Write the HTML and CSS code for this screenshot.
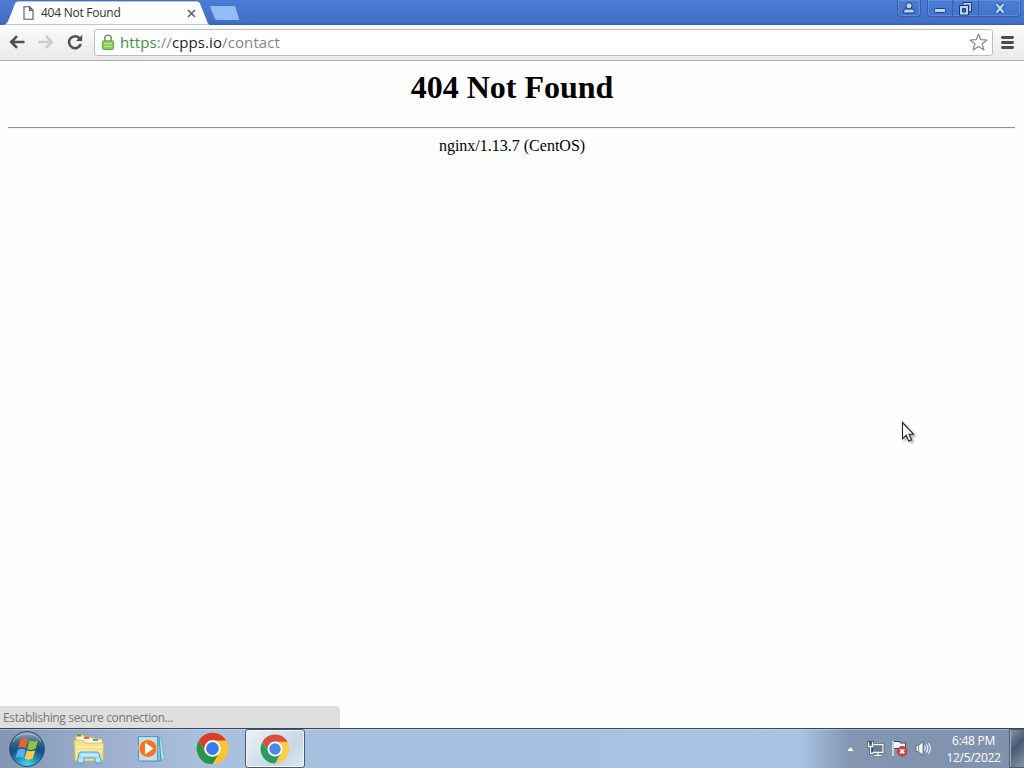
FILE: index.html
```
<!DOCTYPE html>
<html lang="en">
<head>
  <meta charset="UTF-8">
  <title>404 Not Found</title>
  <link rel="stylesheet" href="styles.css">
</head>
<body>
  <header class="titlebar">
    <div class="tab">
      <svg class="tab-shape" width="212" height="25" viewBox="0 0 212 25">
        <path d="M0 25C6 25 7 23 9 18L14 5C15 2 16 1 19 1H195C199 1 200 2 201 5L207 20C208 24 209 25 212 25Z" fill="#fdfdfe" stroke="#3c60a8" stroke-width=".7"/>
      </svg>
      <svg class="page-icon" width="11" height="14" viewBox="0 0 11 14" fill="#fff" stroke="#555" stroke-width="1.1">
        <path d="M1 .8H6.6L10 4.2V13.2H1ZM6.5 .8V4.4H10"/>
      </svg>
      <span class="tab-title">404 Not Found</span>
      <svg class="tab-close" width="9" height="9" viewBox="0 0 9 9" stroke="#666" stroke-width="1.7">
        <path d="M1 1L8 8M8 1L1 8"/>
      </svg>
    </div>
    <svg class="new-tab" width="32" height="16" viewBox="0 0 32 16">
      <path d="M3.500 .5H25C27 .5 27.500 1 28 2.500L31.300 13C31.800 15 31.300 15.500 29.500 15.500H10C8 15.500 7 15 6 13L2 3C1.500 1 1.500 .5 3.500 .5Z" fill="#91bcf5" stroke="#4773bd"/>
    </svg>
    <div class="win-buttons">
      <div class="win-group user">
        <svg width="12" height="12" viewBox="0 0 12 12" fill="#b9d5fb" stroke="#1f386f">
          <path d="M.7 11V9Q.7 7 3 7H9Q11.300 7 11.300 9V11Z"/><circle cx="6" cy="3.800" r="3.100"/>
        </svg>
      </div>
      <div class="win-group">
        <div class="win-btn min">
          <svg width="12" height="5" viewBox="0 0 12 5"><rect x=".5" y=".5" width="11" height="4" rx="1" fill="#b9d5fb" stroke="#233f7d"/></svg>
        </div>
        <div class="win-btn restore">
          <svg width="13" height="14" viewBox="0 0 13 14">
            <path d="M4 .5H12.500V9.500H4Z" fill="#b9d5fb" stroke="#1f386f"/>
            <path d="M6 2.500H10.500V7.500H6Z" fill="#3d67b8"/>
            <path d="M.5 3.500H9.500V13H.5Z" fill="#b9d5fb" stroke="#1f386f"/>
            <path d="M3.500 6.500H6.500V10H3.500Z" fill="#3d67b8" stroke="#1f386f"/>
          </svg>
        </div>
        <div class="win-btn close">
          <svg width="12" height="11" viewBox="0 0 12 11" fill="none">
            <path d="M2.500 1.300L9.500 9.500M9.500 1.300L2.500 9.500" stroke="#28488b" stroke-width="4.200"/>
            <path d="M2.500 1.300L9.500 9.500M9.500 1.300L2.500 9.500" stroke="#b3daf9" stroke-width="2.500"/>
          </svg>
        </div>
      </div>
    </div>
  </header>

  <nav class="toolbar">
    <svg class="nav-icon" width="16" height="14" viewBox="0 0 16 14" fill="none" stroke="#4f4f4f" stroke-width="2.600"><path d="M15.500 7H2.500M8 1.200L2.200 7L8 12.800"/></svg>
    <svg class="nav-icon" width="16" height="14" viewBox="0 0 16 14" fill="none" stroke="#cbcbcb" stroke-width="2.600"><path d="M.5 7H13.500M8 1.200L13.800 7L8 12.800"/></svg>
    <svg class="nav-icon" width="16" height="16" viewBox="0 0 16 16"><path d="M12.800 4.400A6 6 0 1 0 13.800 10" fill="none" stroke="#4f4f4f" stroke-width="2.500"/><path d="M15.200 .8V7H9Z" fill="#4f4f4f"/></svg>
    <div class="address">
      <svg class="lock" width="12" height="16" viewBox="0 0 12 16">
        <path d="M2.800 7.500V4.500C2.800 .2 9.200 .2 9.200 4.500V7.500" fill="none" stroke="#858d7e" stroke-width="1.600"/>
        <rect x=".6" y="6.800" width="10.800" height="8.600" rx="1" fill="#8fd05d" stroke="#55a432"/>
        <path d="M2 9.500H10M2 12.500H10" stroke="#b4e58d"/>
      </svg>
      <span class="url"><span class="scheme">https</span>://<span class="host">cpps.io</span>/contact</span>
      <svg class="star" width="19" height="18" viewBox="0 0 19 18"><path d="M9.500 1L11.700 6.600L18 7L13.200 10.800L14.900 16.900L9.500 13.500L4.100 16.900L5.800 10.800L1 7L7.300 6.600Z" fill="#fff" stroke="#858585" stroke-width="1.200" stroke-linejoin="round"/></svg>
    </div>
    <svg class="menu" width="13" height="13" viewBox="0 0 13 13" stroke="#4c4c4c" stroke-width="2.800" stroke-linecap="round"><path d="M1.400 1.500H11.600M1.400 6.500H11.600M1.400 11.500H11.600"/></svg>
  </nav>

  <main class="page">
    <h1>404 Not Found</h1>
    <hr>
    <p>nginx/1.13.7 (CentOS)</p>
    <div class="status">Establishing secure connection...</div>
  </main>

  <footer class="taskbar">
    <svg class="start" width="38" height="38" viewBox="0 0 38 38">
      <defs>
        <linearGradient id="orb" x1="0" y1="0" x2="0" y2="1"><stop offset="0" stop-color="#9bb2c4"/><stop offset=".3" stop-color="#3f6588"/><stop offset=".55" stop-color="#0c4f82"/><stop offset="1" stop-color="#17739f"/></linearGradient>
        <radialGradient id="glow" cx=".5" cy="1" r=".6"><stop offset="0" stop-color="#4fe6f6"/><stop offset="1" stop-color="#2ba9d5" stop-opacity="0"/></radialGradient>
      </defs>
      <circle cx="19" cy="19" r="17.300" fill="url(#orb)" stroke="#254869"/>
      <circle cx="19" cy="19" r="16.800" fill="url(#glow)"/>
      <path d="M5 12C10 1 28 1 33 12" fill="none" stroke="#c4dae6" stroke-opacity=".6"/>
      <path d="M12.500 9.500Q16 7.200 20 9.500L18 18.300Q14 16.300 10.200 18.300Z" fill="#e8662d"/>
      <path d="M21.300 10.300Q25.500 12.500 30 10.200L27.600 18.800Q23 21 19.300 18.900Z" fill="#8ec348"/>
      <path d="M9.800 19.700Q13.500 17.700 17.600 19.800L15.400 28Q11.500 26 7.500 28Z" fill="#55b1eb"/>
      <path d="M18.900 20.300Q23 22.300 27.200 20.200L24.800 28.500Q20.500 30.800 16.700 28.500Z" fill="#ffcc45"/>
    </svg>
    <svg class="explorer" width="34" height="32" viewBox="0 0 34 32">
      <path d="M3 3L5 1.500H11L13 3.500H20L22 5H30V27H3Z" fill="#ecd16c" stroke="#c2a557" stroke-width=".8"/>
      <path d="M5 3.500H11L13 5.500H20L22 7H30V12H5Z" fill="#fffdf0"/>
      <path d="M5 2.500H9" stroke="#35a45a" stroke-width="2"/><path d="M12 5H17" stroke="#d46a4b" stroke-width="2"/><path d="M21 7H26" stroke="#4e9de0" stroke-width="2"/>
      <path d="M2 7H11L14 10H32L31 28H3Z" fill="#f6e28a" stroke="#d1b560" stroke-width=".8"/>
      <path d="M4 14H30M4 18H30" stroke="#fff4bc"/>
      <path d="M5 30L7 21Q7.500 19 9 19H25Q26.500 19 27 21L30 30H23V25H12V30Z" fill="#a6dcf4" stroke="#46a5d2"/>
      <path d="M9 22H26M7 27H11M24 27H28" stroke="#e8faff"/>
    </svg>
    <svg class="player" width="30" height="28" viewBox="0 0 30 28">
      <path d="M8 3H24L28 25H8Z" fill="#a9d8ef" stroke="#7db5cf"/><path d="M5 2H22L24 26H5Z" fill="#82c2e3" stroke="#4996bf"/>
      <path d="M1.500 1.500H20.500V26H1.500Z" fill="#bce1f1" stroke="#4c9bc2"/>
      <circle cx="11" cy="13.500" r="9" fill="#ef7625" stroke="#ffd3a4"/><path d="M8 7.500L16.500 13.500L8 19.500Z" fill="#fff"/>
    </svg>
    <svg class="chrome" width="33" height="33" viewBox="0 0 48 48">
      <circle cx="24" cy="24" r="23" fill="#fbc62b"/>
      <path d="M4.080 12.500A23 23 0 0 1 43.920 12.500H24A11.500 11.500 0 0 0 14.040 29.750Z" fill="#dc3c2f"/>
      <path d="M4.080 12.500L14.040 29.750A11.500 11.500 0 0 0 33.960 29.750L24 47A23 23 0 0 1 4.080 12.500Z" fill="#27924a"/>
      <circle cx="24" cy="24" r="12" fill="#fff"/><circle cx="24" cy="24" r="9.300" fill="#3979e9"/>
    </svg>
    <div class="task-active">
      <svg width="30" height="30" viewBox="0 0 48 48">
        <circle cx="24" cy="24" r="23" fill="#f8cf4c"/>
        <path d="M4.080 12.500A23 23 0 0 1 43.920 12.500H24A11.500 11.500 0 0 0 14.040 29.750Z" fill="#d85044"/>
        <path d="M4.080 12.500L14.040 29.750A11.500 11.500 0 0 0 33.960 29.750L24 47A23 23 0 0 1 4.080 12.500Z" fill="#279b63"/>
        <circle cx="24" cy="24" r="12" fill="#fff"/><circle cx="24" cy="24" r="9.300" fill="#4b89e9"/>
      </svg>
    </div>
    <div class="tray">
      <svg width="9" height="6" viewBox="0 0 9 6"><path d="M.3 5.500L4.500 .7L8.700 5.500Z" fill="#fff" stroke="#5b6980" stroke-width=".5"/></svg>
      <svg class="network" width="18" height="16" viewBox="0 0 18 16" fill="none">
        <path d="M6 3.500H16V11.500H6ZM7.500 14.500H14.500M11 12V14M1.500 1.500H5.500V5.500H1.500ZM3.500 5.500V12.500H6" stroke="#35465c" stroke-width="2.600"/>
        <path d="M6 3.500H16V11.500H6Z" fill="#66798d"/>
        <path d="M6.500 3.500H16V11.500H5.500M7.500 14.500H14.500M11 12V14M1.500 1V5.500H5.500V1M3.500 5.500V12.500H6" stroke="#fff" stroke-width="1.300"/>
      </svg>
      <svg class="flag" width="17" height="17" viewBox="0 0 17 17">
        <path d="M2 1V16M3 2H8L9.500 3.500H14V9H9L7.500 8H3Z" fill="#f8fbff" stroke="#39485f" stroke-width="2"/>
        <path d="M2 1V16" stroke="#fff" stroke-width="1.500"/><path d="M3 2H8L9.500 3.500H14V9H9L7.500 8H3Z" fill="#f3f6fb"/>
        <circle cx="11.200" cy="11.300" r="4.900" fill="#d83a40" stroke="#b8454c"/><path d="M9.200 9.300L13.200 13.300M13.200 9.300L9.200 13.300" stroke="#fff" stroke-width="1.800"/>
      </svg>
      <svg class="volume" width="17" height="15" viewBox="0 0 17 15">
        <path d="M1 4.500H3.500L8 .7V14.300L3.500 10.500H1Z" fill="#fff" stroke="#48586e" stroke-width=".8"/><path d="M3.700 5V10" stroke="#71819a"/>
        <path d="M9.500 5Q11 7.500 9.500 10M11.500 3.500Q14 7.500 11.500 11.500M13.500 2Q17 7.500 13.500 13" fill="none" stroke="#f2f7ff" stroke-width="1.100"/>
      </svg>
    </div>
    <div class="clock"><span>6:48 PM</span><span class="date">12/5/2022</span></div>
    <div class="show-desktop"></div>
  </footer>

  <svg class="cursor" width="19" height="26" viewBox="0 0 19 26"><path d="M2.500 1.500V17.800L6.200 14.300L8.800 20L11.500 18.800L9 13.200H13.500Z" fill="#fff" stroke="#222" stroke-width="1.100"/></svg>
</body>
</html>
```
FILE: styles.css
```
* { box-sizing: border-box; }
svg { display: block; flex: none; }

body {
  margin: 0;
  width: 1024px;
  height: 768px;
  overflow: hidden;
  display: flex;
  flex-direction: column;
  background: #fefefe;
  font-family: "Open Sans", "Noto Sans", sans-serif;
}

/* Title bar and tabs */
.titlebar {
  height: 25px;
  flex: none;
  display: flex;
  background: linear-gradient(#4b7cd5, #416fc6 90%, #355fae);
}
.tab {
  position: relative;
  width: 208px;
  padding: 1px 12px 0 23px;
  display: flex;
  align-items: center;
}
.tab-shape { position: absolute; left: 0; top: 0; }
.page-icon, .tab-title, .tab-close { position: relative; }
.tab-title {
  margin-left: 7px;
  font-size: 12px;
  letter-spacing: -0.25px;
  line-height: 20px;
  color: #333;
  white-space: nowrap;
}
.tab-close { margin-left: auto; }
.new-tab { margin-top: 5px; }

/* Window buttons */
.win-buttons {
  display: flex;
  gap: 6px;
  margin-left: auto;
  padding-right: 3px;
}
.win-group {
  display: flex;
  height: 17px;
  border: 1px solid #385fa9;
  border-top: 0;
  border-radius: 0 0 4px 4px;
  box-shadow: inset 0 0 0 1px rgba(137, 174, 236, 0.38);
}
.user {
  width: 24px;
  justify-content: center;
  padding-top: 2px;
}
.win-btn {
  display: flex;
  justify-content: center;
  border-right: 1px solid #385fa9;
}
.min { width: 25px; padding-top: 8px; }
.restore { width: 26px; padding-top: 2px; }
.close { width: 41px; padding-top: 3px; border: 0; }

/* Toolbar */
.toolbar {
  height: 36px;
  flex: none;
  display: flex;
  align-items: center;
  padding: 0 10px 1px 9px;
  background: linear-gradient(#fbfbfb, #eaeaea);
  border-bottom: 1px solid #acacac;
}
.nav-icon { margin-right: 13px; }
.nav-icon + .nav-icon + .nav-icon { margin-right: 11px; }
.address {
  width: 899px;
  height: 27px;
  display: flex;
  align-items: center;
  padding: 0 4px 0 7px;
  background: #fff;
  border: 1px solid #bdbdbd;
  border-radius: 3px;
}
.url {
  margin-left: 6px;
  font-size: 15px;
  letter-spacing: 0.1px;
  line-height: 24px;
  color: #858585;
  white-space: nowrap;
}
.scheme { color: #359539; }
.host { color: #222; }
.star { margin-left: auto; }
.menu { margin-left: auto; }

/* Error page */
.page {
  position: relative;
  flex: 1;
  padding: 8px 8px 0;
  text-align: center;
  font-family: "Liberation Serif", "Times New Roman", serif;
  font-size: 16px;
  color: #000;
}
.page h1 { margin: 0 0 21px; font-size: 32px; }
.page hr {
  margin: 0 1px 8px 0;
  border: 0;
  border-top: 1px solid #8f8f8f;
  border-bottom: 1px solid #f2f2f2;
}
.page p { margin: 0; }
.status {
  position: absolute;
  left: 0;
  bottom: 0;
  width: 340px;
  height: 22px;
  padding-left: 3px;
  background: #dfdfdf;
  border-radius: 0 4px 0 0;
  font: 12px/24px "Open Sans", "Noto Sans", sans-serif;
  letter-spacing: -0.35px;
  color: #777;
  text-align: left;
}

/* Taskbar */
.taskbar {
  height: 40px;
  flex: none;
  display: flex;
  align-items: center;
  padding-left: 8px;
  border-top: 1px solid #33445c;
  background: linear-gradient(90deg, #8596b5 0, #92a5c4 60px, #a0b3d3 130px, #a9c1df 210px, #a6c1e0 480px, #a9c3e3 800px, #8296b2 850px, #8091ab 1024px);
  box-shadow: inset 0 1px rgba(255, 255, 255, 0.3);
}
.explorer { margin-left: 26px; }
.player { margin-left: 31px; }
.chrome { margin-left: 29px; }
.task-active {
  width: 60px;
  height: 39px;
  margin-left: 16px;
  display: flex;
  align-items: center;
  justify-content: center;
  border: 1px solid #485a73;
  border-radius: 3px;
  background: linear-gradient(135deg, #edf3f8, #c7d7e6 65%, #dce8f2);
  box-shadow: inset 0 0 0 1px #f2f7fb;
}
.tray {
  display: flex;
  align-items: center;
  margin-left: auto;
}
.network { margin-left: 12px; }
.flag { margin-left: 6px; }
.volume { margin-left: 7px; }
.clock {
  width: 53px;
  margin-left: 15px;
  display: flex;
  flex-direction: column;
  align-items: center;
  font-size: 12px;
  line-height: 17px;
  letter-spacing: -0.3px;
  color: #fff;
  white-space: nowrap;
}
.show-desktop {
  width: 15px;
  height: 39px;
  margin-left: 9px;
  border: 1px solid #4b5b70;
  border-right: 0;
  background: linear-gradient(135deg, #8796a9, #475974 45%, #8796ac);
  box-shadow: inset 1px 0 #a3b3c4;
}

/* Mouse pointer */
.cursor {
  position: absolute;
  left: 900px;
  top: 421px;
  filter: drop-shadow(2px 2px 1px rgba(0, 0, 0, 0.3));
}
```
